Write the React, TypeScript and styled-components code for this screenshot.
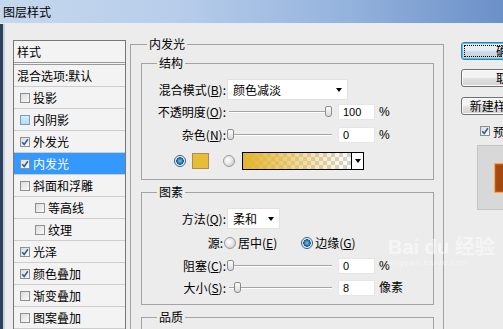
import styled, { createGlobalStyle } from "styled-components";

const GlobalStyle = createGlobalStyle`
  html, body {
    margin: 0;
    padding: 0;
  }
  body {
    background: #ececec;
    font-family: "Noto Sans CJK SC", "Noto Sans", sans-serif;
    font-size: 12px;
    color: #000;
  }
`;

const styleItems = [
  { label: "投影", checked: false },
  { label: "内阴影", checked: false, hover: true },
  { label: "外发光", checked: true },
  { label: "内发光", checked: true, selected: true },
  { label: "斜面和浮雕", checked: false },
  { label: "等高线", checked: false, sub: true },
  { label: "纹理", checked: false, sub: true },
  { label: "光泽", checked: true },
  { label: "颜色叠加", checked: true },
  { label: "渐变叠加", checked: false },
  { label: "图案叠加", checked: false },
];

const CheckBox = ({ checked, hover }: { checked?: boolean; hover?: boolean }) => (
  <Box $hover={hover}>
    {checked && (
      <svg width="8" height="8" viewBox="0 0 8 8">
        <path d="M1.2 4.2 L3.2 6.4 L6.9 1.3" fill="none" stroke="#2f5f9f" strokeWidth="1.6" />
      </svg>
    )}
  </Box>
);

const Slider = ({ x }: { x: number }) => (
  <SliderWrap>
    <Track />
    <Thumb $x={x} />
  </SliderWrap>
);

const SelectBox = ({ text, w }: { text: string; w: number }) => (
  <Select $w={w}>
    <span>{text}</span>
    <Arrow />
  </Select>
);

const App = () => {
  return (
    <Window>
      <GlobalStyle />
      <TitleBar>图层样式</TitleBar>
      <Body>
        <StyleList>
          <ListHeader>样式</ListHeader>
          <ListItem $indent={3}>混合选项:默认</ListItem>
          {styleItems.map((item) => (
            <ListItem key={item.label} $indent={item.sub ? 21 : 6} $selected={item.selected}>
              <CheckBox checked={item.checked} hover={item.hover} />
              {item.label}
            </ListItem>
          ))}
        </StyleList>

        <Main>
          <OuterGroup>
            <OuterLegend>内发光</OuterLegend>
            <Group $pb={9}>
              <Legend>结构</Legend>
              <Row $h={21}>
                <Label>
                  混合模式(<U>B</U>):
                </Label>
                <SelectBox text="颜色减淡" w={121} />
              </Row>
              <Row $h={16} $mt={4}>
                <Label>
                  不透明度(<U>O</U>):
                </Label>
                <Slider x={100} />
                <NumInput>100</NumInput>
                <Unit>%</Unit>
              </Row>
              <Row $h={16} $mt={7}>
                <Label>
                  杂色(<U>N</U>):
                </Label>
                <Slider x={2} />
                <NumInput>0</NumInput>
                <Unit>%</Unit>
              </Row>
              <Row $h={18} $mt={9} $pl={32}>
                <Radio $on />
                <Swatch />
                <Radio $ml={14} />
                <GradientBox>
                  <GradientFill />
                  <GradientArrow>
                    <Arrow />
                  </GradientArrow>
                </GradientBox>
              </Row>
            </Group>

            <Group $pb={8}>
              <Legend>图素</Legend>
              <Row $h={21}>
                <Label>
                  方法(<U>Q</U>):
                </Label>
                <SelectBox text="柔和" w={53} />
              </Row>
              <Row $h={16} $mt={6}>
                <Label $w={81}>源:</Label>
                <Radio $ml={1} />
                <RadioText>
                  居中(<U>E</U>)
                </RadioText>
                <Radio $ml={24} $on />
                <RadioText>
                  边缘(<U>G</U>)
                </RadioText>
              </Row>
              <Row $h={16} $mt={7}>
                <Label>
                  阻塞(<U>C</U>):
                </Label>
                <Slider x={2} />
                <NumInput>0</NumInput>
                <Unit>%</Unit>
              </Row>
              <Row $h={16} $mt={6}>
                <Label>
                  大小(<U>S</U>):
                </Label>
                <Slider x={9} />
                <NumInput>8</NumInput>
                <Unit>像素</Unit>
              </Row>
            </Group>

            <Group $pb={40}>
              <Legend>品质</Legend>
            </Group>
          </OuterGroup>
        </Main>

        <Side>
          <Button $default>确定</Button>
          <Button $mt={9}>取消</Button>
          <Button $mt={10}>新建样式(W)...</Button>
          <PreviewCheck>
            <CheckBox checked />
            预览(<U>V</U>)
          </PreviewCheck>
          <PreviewBox>
            <PreviewSample />
          </PreviewBox>
        </Side>
      </Body>
      <Watermark>
        <span>Bai du 经验</span>
        <small>jingyan.baidu.com</small>
      </Watermark>
    </Window>
  );
};

export default App;

const Window = styled.div`
  position: relative;
  width: 503px;
  height: 329px;
  overflow: hidden;
  background: #ececec;
`;

const TitleBar = styled.div`
  height: 23px;
  line-height: 23px;
  padding-left: 3px;
  border-bottom: 1px solid #e4ecf6;
  background: linear-gradient(to right, #c6d8ee 0%, #b7cdea 35%, #93b2dc 70%, #6b90c8 100%);
  font-size: 12px;
  color: #000;
`;

const Body = styled.div`
  display: flex;
  align-items: flex-start;
  height: 305px;
  box-sizing: border-box;
  padding: 13px 0 0 10px;
  border-left: 3px solid #2f405d;
  box-shadow: inset 2px 0 0 #c9d3df;
`;

const StyleList = styled.div`
  flex-shrink: 0;
  width: 113px;
  height: 320px;
  margin-top: 3px;
  box-sizing: border-box;
  border: 1px solid #777;
  background: #f3f3f3;
`;

const ListHeader = styled.div`
  height: 21px;
  line-height: 21px;
  padding-left: 3px;
  border-bottom: 3px double #9a9a9a;
`;

const ListItem = styled.div<{ $indent: number; $selected?: boolean }>`
  display: flex;
  align-items: center;
  gap: 3px;
  height: 21px;
  padding-left: ${({ $indent }) => $indent}px;
  border-bottom: 1px solid #cdcdcd;
  background: ${({ $selected }) => ($selected ? "#3399ff" : "transparent")};
  color: ${({ $selected }) => ($selected ? "#fff" : "#000")};
`;

const Box = styled.span<{ $hover?: boolean }>`
  display: inline-flex;
  align-items: center;
  justify-content: center;
  width: 10px;
  height: 10px;
  box-sizing: border-box;
  border: 1px solid ${({ $hover }) => ($hover ? "#6f9fc4" : "#8e8f8f")};
  background: ${({ $hover }) =>
    $hover
      ? "linear-gradient(#d6eefb, #b2dcf2)"
      : "linear-gradient(135deg, #dcdcdc, #fafafa)"};
  flex-shrink: 0;
`;

const Main = styled.div`
  flex-shrink: 0;
  margin-left: 4px;
`;

const OuterGroup = styled.fieldset`
  width: 314px;
  height: 320px;
  box-sizing: border-box;
  margin: 0;
  padding: 0 9px 0 10px;
  border: 1px solid #a3a3a3;
`;

const OuterLegend = styled.legend`
  margin-left: 6px;
  padding: 0 2px;
  height: 14px;
  line-height: 14px;
`;

const Group = styled.fieldset<{ $pb: number }>`
  display: flex;
  flex-direction: column;
  min-width: 0;
  margin: 5px 0 0;
  padding: 9px 0 ${({ $pb }) => $pb}px 0;
  border: 1px solid #a3a3a3;
`;

const Legend = styled.legend`
  margin-left: 15px;
  padding: 0 2px;
  height: 14px;
  line-height: 14px;
`;

const Row = styled.div<{ $h: number; $mt?: number; $pl?: number }>`
  display: flex;
  align-items: center;
  height: ${({ $h }) => $h}px;
  margin-top: ${({ $mt }) => $mt ?? 0}px;
  padding-left: ${({ $pl }) => $pl ?? 0}px;
  line-height: 16px;
  white-space: nowrap;
`;

const Label = styled.span<{ $w?: number }>`
  width: ${({ $w }) => $w ?? 84}px;
  flex-shrink: 0;
  text-align: right;
`;

const U = styled.span`
  text-decoration: underline;
`;

const Select = styled.div<{ $w: number }>`
  display: flex;
  align-items: center;
  justify-content: space-between;
  width: ${({ $w }) => $w}px;
  height: 21px;
  margin-left: 1px;
  padding: 0 5px;
  box-sizing: border-box;
  background: #fff;
  border: 1px solid #e2e2e2;
`;

const Arrow = styled.span`
  width: 0;
  height: 0;
  border-left: 3.5px solid transparent;
  border-right: 3.5px solid transparent;
  border-top: 4px solid #000;
`;

const SliderWrap = styled.div`
  position: relative;
  width: 103px;
  height: 16px;
  margin-left: 3px;
`;

const Track = styled.div`
  position: absolute;
  left: 0;
  right: 0;
  top: 7px;
  height: 1px;
  background: #a5a5a5;
  border-bottom: 1px solid #fff;
`;

const Thumb = styled.div<{ $x: number }>`
  position: absolute;
  top: 2px;
  left: ${({ $x }) => $x - 4}px;
  width: 7px;
  height: 11px;
  box-sizing: border-box;
  border: 1px solid #8c8c8c;
  border-radius: 2px 2px 3px 3px;
  background: linear-gradient(#fdfdfd, #d9d9d9);
`;

const NumInput = styled.div`
  width: 37px;
  height: 16px;
  margin-left: 6px;
  padding-left: 4px;
  box-sizing: border-box;
  background: #fff;
  border: 1px solid #e6e6e6;
  font-family: "Liberation Sans", Arial, sans-serif;
  font-size: 11px;
  line-height: 14px;
`;

const Unit = styled.span`
  margin-left: 4px;
  font-family: "Liberation Sans", "Noto Sans CJK SC", sans-serif;
`;

const Radio = styled.span<{ $on?: boolean; $ml?: number }>`
  width: 12px;
  height: 12px;
  margin-left: ${({ $ml }) => $ml ?? 0}px;
  box-sizing: border-box;
  border-radius: 50%;
  flex-shrink: 0;
  border: 1px solid ${({ $on }) => ($on ? "#2c5f88" : "#9c9c9c")};
  background: ${({ $on }) =>
    $on
      ? "radial-gradient(circle at 50% 50%, #7cc4ef 0, #2a7ab8 2.5px, #1b4e7a 3.5px, #e8eef3 4px, #fff 5px)"
      : "radial-gradient(circle at 40% 40%, #fff 0, #e6e6e6 4px, #d2d2d2 6px)"};
`;

const RadioText = styled.span`
  margin-left: 2px;
`;

const Swatch = styled.span`
  width: 17px;
  height: 16px;
  margin-left: 6px;
  box-sizing: border-box;
  background: #e7bd37;
  border: 1px solid #a58f52;
`;

const GradientBox = styled.div`
  display: flex;
  width: 122px;
  height: 18px;
  margin-left: 7px;
  box-sizing: border-box;
  border: 1px solid #000;
`;

const GradientFill = styled.div`
  flex: 1;
  background: linear-gradient(to right, #e4b42b, rgba(232, 186, 60, 0.5) 55%, rgba(240, 210, 140, 0) 100%),
    repeating-conic-gradient(#ffffff 0 25%, #d3d3d3 0 50%) 0 0 / 8px 8px;
`;

const GradientArrow = styled.div`
  display: flex;
  align-items: center;
  justify-content: center;
  width: 11px;
  border-left: 1px solid #000;
  background: #fff;
`;

const Side = styled.div`
  flex-shrink: 0;
  display: flex;
  flex-direction: column;
  margin: 5px 0 0 17px;
`;

const Button = styled.div<{ $default?: boolean; $mt?: number }>`
  position: relative;
  width: 94px;
  height: 18px;
  margin-top: ${({ $mt }) => $mt ?? 0}px;
  box-sizing: border-box;
  border: 1px solid ${({ $default }) => ($default ? "#3c7fb1" : "#707070")};
  border-radius: 3px;
  background: ${({ $default }) =>
    $default
      ? "linear-gradient(#e6eef3 45%, #cbdbe6 55%, #c2d6e2)"
      : "linear-gradient(#f3f3f3 45%, #e0e0e0 55%, #d3d3d3)"};
  box-shadow: ${({ $default }) => ($default ? "inset 0 0 0 1px #4fc4e6" : "inset 0 0 0 1px #fbfbfb")};
  text-align: center;
  line-height: 16px;
  white-space: nowrap;

  &::after {
    content: "";
    display: ${({ $default }) => ($default ? "block" : "none")};
    position: absolute;
    inset: 2px;
    border: 1px dotted #000;
  }
`;

const PreviewCheck = styled.div`
  display: flex;
  align-items: center;
  gap: 3px;
  height: 12px;
  margin: 10px 0 0 19px;
  white-space: nowrap;
`;

const PreviewBox = styled.div`
  width: 70px;
  height: 65px;
  margin: 8px 0 0 16px;
  box-sizing: border-box;
  padding: 17px 0 0 16px;
  background: #d8d8d8;
  border: 1px solid #c4c4c4;
`;

const PreviewSample = styled.div`
  width: 40px;
  height: 30px;
  box-sizing: border-box;
  background: #a4480f;
  border: 1px solid #f6a84c;
  box-shadow: inset 0 0 2px #f09040;
`;

const Watermark = styled.div`
  position: absolute;
  left: 388px;
  top: 236px;
  display: flex;
  flex-direction: column;
  font-family: "Liberation Sans", "Noto Sans CJK SC", sans-serif;
  color: rgba(255, 255, 255, 0.5);
  pointer-events: none;
  white-space: nowrap;

  span {
    font-size: 20px;
    font-weight: bold;
    line-height: 22px;
  }

  small {
    font-size: 8px;
    line-height: 10px;
    letter-spacing: 1px;
  }
`;
